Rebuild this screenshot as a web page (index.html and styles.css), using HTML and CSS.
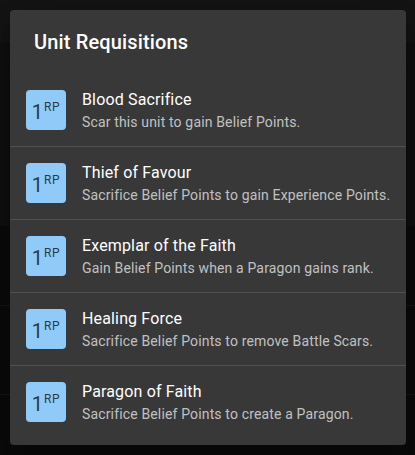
FILE: index.html
```html
<!DOCTYPE html>
<html lang="en">
<head>
<meta charset="utf-8">
<title>Unit Requisitions</title>
<link rel="stylesheet" href="styles.css">
</head>
<body>
<div class="page">
  <div class="band band-top"></div>
  <div class="band band-mid"></div>
  <div class="band band-row-a"></div>
  <div class="band band-row-b"></div>
</div>
<div class="dialog" role="dialog">
  <h2 class="dialog-title">Unit Requisitions</h2>
  <ul class="list">
    <li class="item">
      <div class="avatar"><span class="num">1</span><span class="unit">RP</span></div>
      <div class="text"><div class="primary">Blood Sacrifice</div><div class="secondary">Scar this unit to gain Belief Points.</div></div>
    </li>
    <li class="item">
      <div class="avatar"><span class="num">1</span><span class="unit">RP</span></div>
      <div class="text"><div class="primary">Thief of Favour</div><div class="secondary">Sacrifice Belief Points to gain Experience Points.</div></div>
    </li>
    <li class="item">
      <div class="avatar"><span class="num">1</span><span class="unit">RP</span></div>
      <div class="text"><div class="primary">Exemplar of the Faith</div><div class="secondary">Gain Belief Points when a Paragon gains rank.</div></div>
    </li>
    <li class="item">
      <div class="avatar"><span class="num">1</span><span class="unit">RP</span></div>
      <div class="text"><div class="primary">Healing Force</div><div class="secondary">Sacrifice Belief Points to remove Battle Scars.</div></div>
    </li>
    <li class="item last">
      <div class="avatar"><span class="num">1</span><span class="unit">RP</span></div>
      <div class="text"><div class="primary">Paragon of Faith</div><div class="secondary">Sacrifice Belief Points to create a Paragon.</div></div>
    </li>
  </ul>
</div>
</body>
</html>
```

FILE: styles.css
```css
html, body {
  margin: 0;
  padding: 0;
}
body {
  background: #0b0b0b;
  font-family: Roboto, "Noto Sans", sans-serif;
  width: 415px;
  height: 455px;
  overflow: hidden;
}
.page {
  display: flex;
  flex-direction: column;
}
.band-top {
  height: 42px;
  background: #141414;
}
.band-mid {
  height: 184px;
  background: #101010;
}
.band-row-a {
  height: 79px;
  border-bottom: 1px solid #171717;
}
.band-row-b {
  height: 88px;
  border-bottom: 1px solid #171717;
}
.dialog {
  position: absolute;
  left: 10px;
  top: 10px;
  width: 396px;
  background: #383838;
  border-radius: 4px;
  color: #fff;
  box-shadow: 0 11px 15px -7px rgba(0,0,0,0.2), 0 24px 38px 3px rgba(0,0,0,0.14), 0 9px 46px 8px rgba(0,0,0,0.12);
}
.dialog-title {
  margin: 0;
  padding: 16px 24px;
  font-size: 20px;
  font-weight: 500;
  line-height: 32px;
  letter-spacing: 0.15px;
}
.list {
  list-style: none;
  margin: 0;
  padding: 0 0 7px;
}
.item {
  display: flex;
  align-items: center;
  padding: 8px 16px;
  border-bottom: 1px solid rgba(255,255,255,0.12);
}
.item.last {
  border-bottom: none;
}
.avatar {
  width: 40px;
  height: 40px;
  box-sizing: border-box;
  padding-top: 4px;
  flex: none;
  margin-right: 16px;
  border-radius: 4px;
  background: #90caf9;
  color: #2b3a45;
  text-align: center;
  line-height: 36px;
  white-space: nowrap;
}
.num {
  font-size: 20px;
}
.unit {
  font-size: 12px;
  vertical-align: 8px;
  line-height: 1;
  letter-spacing: 0.6px;
  margin-left: 1px;
}
.text {
  margin: 6px 0;
  min-width: 0;
}
.primary {
  font-size: 16px;
  line-height: 24px;
  letter-spacing: 0.15px;
}
.secondary {
  font-size: 14px;
  line-height: 20px;
  letter-spacing: 0.15px;
  color: rgba(255,255,255,0.7);
  white-space: nowrap;
}
```
